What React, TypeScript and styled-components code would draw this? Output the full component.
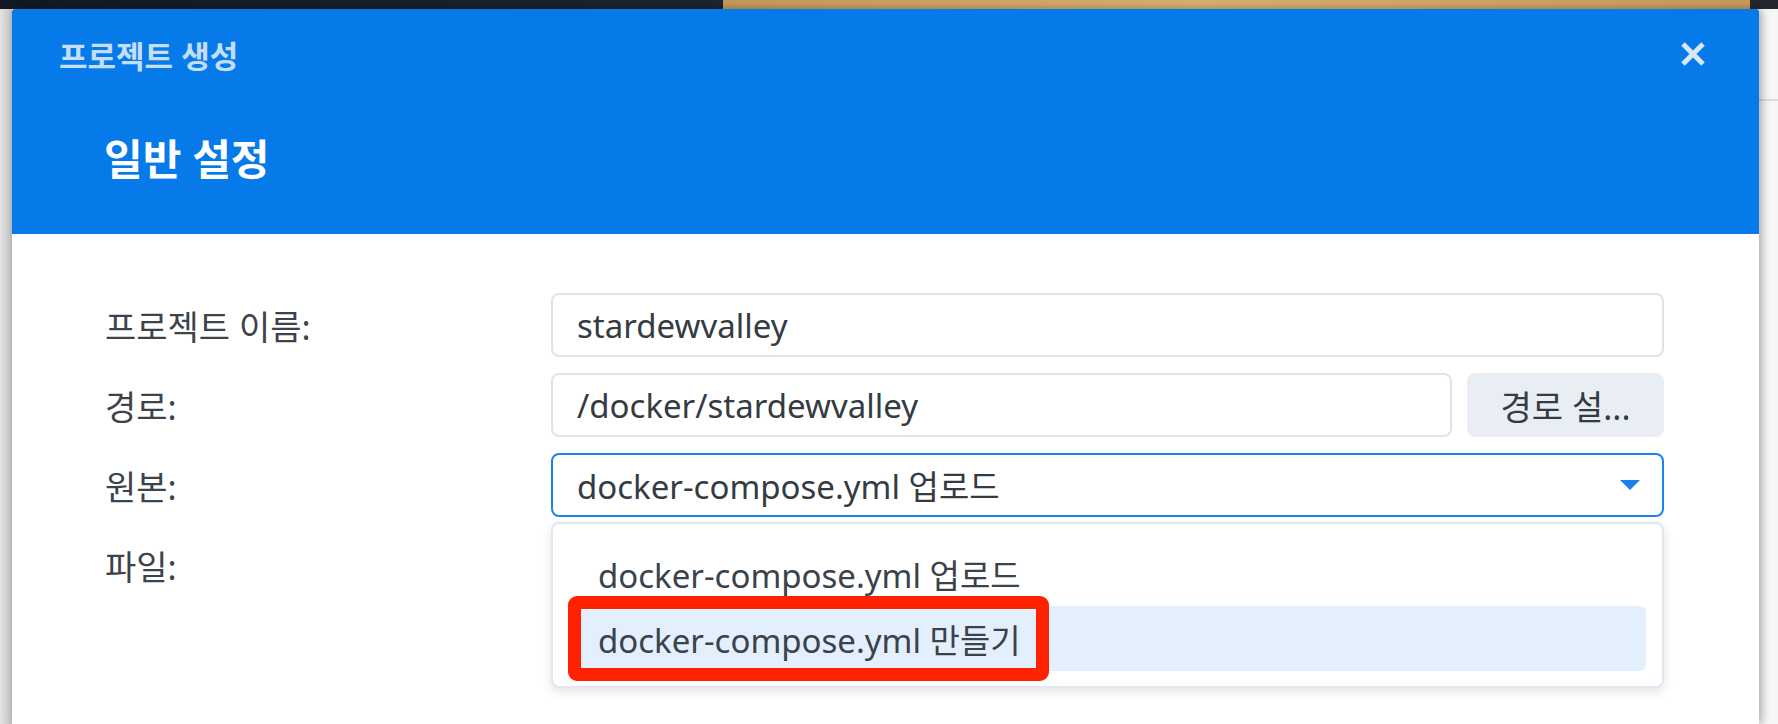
import React from 'react';
import styled, { createGlobalStyle } from 'styled-components';

const GlobalStyle = createGlobalStyle`
  *, *::before, *::after { box-sizing: border-box; }
  html, body { margin: 0; padding: 0; background: #f4f4f4; }
  body {
    font-family: "Noto Sans", "Noto Sans CJK KR", sans-serif;
    overflow: hidden;
  }
`;

const Page = styled.div`
  width: 1778px;
  height: 724px;
  display: flex;
  flex-direction: column;
  overflow: hidden;
`;

const TopStrip = styled.div`
  height: 9px;
  flex: none;
  background: linear-gradient(
    90deg,
    #121923 0,
    #1d2431 723px,
    #c4985a 723px,
    #d6b06f 1200px,
    #c7995a 1750px,
    #24272c 1750px
  );
`;

const Stage = styled.div`
  flex: 1;
  display: flex;
  min-height: 0;
`;

const LeftGutter = styled.div`
  width: 12px;
  flex: none;
  background: linear-gradient(90deg, #e4e4e4, #c2c2c2);
`;

const RightGutter = styled.div`
  flex: 1;
  background: linear-gradient(
    180deg,
    #f6f6f6 90px,
    #dddddd 90px,
    #dddddd 92px,
    #f6f6f6 92px
  );
`;

const Dialog = styled.div`
  width: 1747px;
  flex: none;
  display: flex;
  flex-direction: column;
  background: #fff;
  border-radius: 3px 3px 0 0;
  box-shadow: 3px 0 8px rgba(0, 0, 0, 0.3);
  position: relative;
  z-index: 1;
`;

const Header = styled.div`
  height: 225px;
  flex: none;
  display: flex;
  flex-direction: column;
  background: #077ae9;
  border-radius: 3px 3px 0 0;
`;

const TitleBar = styled.div`
  height: 90px;
  display: flex;
  align-items: center;
  justify-content: space-between;
  padding: 0 53px 0 47px;
`;

const Title = styled.div`
  font-size: 31px;
  font-weight: 700;
  color: rgba(232, 241, 252, 0.85);
`;

const CloseButton = styled.div`
  width: 26px;
  height: 26px;
  display: flex;
  color: #d8e7f8;
`;

const Heading = styled.h2`
  margin: 34px 0 0 92px;
  font-size: 42px;
  line-height: 52px;
  font-weight: 700;
  color: #ffffff;
`;

const Body = styled.div`
  padding: 59px 95px 0 93px;
  display: grid;
  grid-template-columns: 446px 1fr;
  grid-auto-rows: 64px;
  row-gap: 16px;
`;

const Label = styled.div`
  display: flex;
  align-items: center;
  font-size: 34px;
  color: #3c434b;
`;

const FieldRow = styled.div`
  display: flex;
  gap: 15px;
  min-width: 0;
`;

const Field = styled.div<{ $focused?: boolean }>`
  flex: 1;
  display: flex;
  align-items: center;
  padding: 0 22px 0 24px;
  border: 2px solid ${(p) => (p.$focused ? '#1a84ee' : '#dbe3ec')};
  border-radius: 8px;
  font-size: 33px;
  color: #353b42;
  background: #fff;
  white-space: nowrap;
`;

const Button = styled.div`
  width: 197px;
  flex: none;
  display: flex;
  align-items: center;
  justify-content: center;
  border-radius: 8px;
  background: #e9eef4;
  font-size: 34px;
  color: #353b42;
`;

const SelectWrap = styled.div`
  position: relative;
  display: flex;
`;

const Arrow = styled.svg`
  margin-left: auto;
  flex: none;
`;

const Menu = styled.div`
  position: absolute;
  top: calc(100% + 5px);
  left: 0;
  right: 0;
  z-index: 2;
  padding: 17px 16px 15px;
  background: #fff;
  border: 2px solid #e0e7ef;
  border-radius: 8px;
  box-shadow: 0 4px 10px rgba(40, 60, 90, 0.14);
`;

const MenuItem = styled.div<{ $active?: boolean }>`
  position: relative;
  height: 65px;
  display: flex;
  align-items: center;
  padding-left: 29px;
  border-radius: 6px;
  font-size: 33px;
  color: #3a424b;
  background: ${(p) => (p.$active ? '#e3effc' : 'transparent')};
`;

const Highlight = styled.span`
  position: absolute;
  left: -1px;
  top: -10px;
  width: 481px;
  height: 85px;
  border: 13px solid #ff2200;
  border-radius: 9px;
  pointer-events: none;
`;

export default function App() {
  return (
    <>
      <GlobalStyle />
      <Page>
        <TopStrip />
        <Stage>
          <LeftGutter />
          <Dialog>
            <Header>
              <TitleBar>
                <Title>프로젝트 생성</Title>
                <CloseButton>
                  <svg width="26" height="26" viewBox="0 0 26 26">
                    <path d="M3 3 L23 23 M23 3 L3 23" stroke="currentColor" strokeWidth="5" />
                  </svg>
                </CloseButton>
              </TitleBar>
              <Heading>일반 설정</Heading>
            </Header>
            <Body>
              <Label>프로젝트 이름:</Label>
              <FieldRow>
                <Field>stardewvalley</Field>
              </FieldRow>

              <Label>경로:</Label>
              <FieldRow>
                <Field>/docker/stardewvalley</Field>
                <Button>경로 설...</Button>
              </FieldRow>

              <Label>원본:</Label>
              <SelectWrap>
                <Field $focused>
                  docker-compose.yml 업로드
                  <Arrow width="20" height="10" viewBox="0 0 20 10">
                    <path d="M0 0 H20 L10 10 Z" fill="#1a7fe6" />
                  </Arrow>
                </Field>
                <Menu>
                  <MenuItem>docker-compose.yml 업로드</MenuItem>
                  <MenuItem $active>
                    docker-compose.yml 만들기
                    <Highlight />
                  </MenuItem>
                </Menu>
              </SelectWrap>

              <Label>파일:</Label>
              <FieldRow />
            </Body>
          </Dialog>
          <RightGutter />
        </Stage>
      </Page>
    </>
  );
}
